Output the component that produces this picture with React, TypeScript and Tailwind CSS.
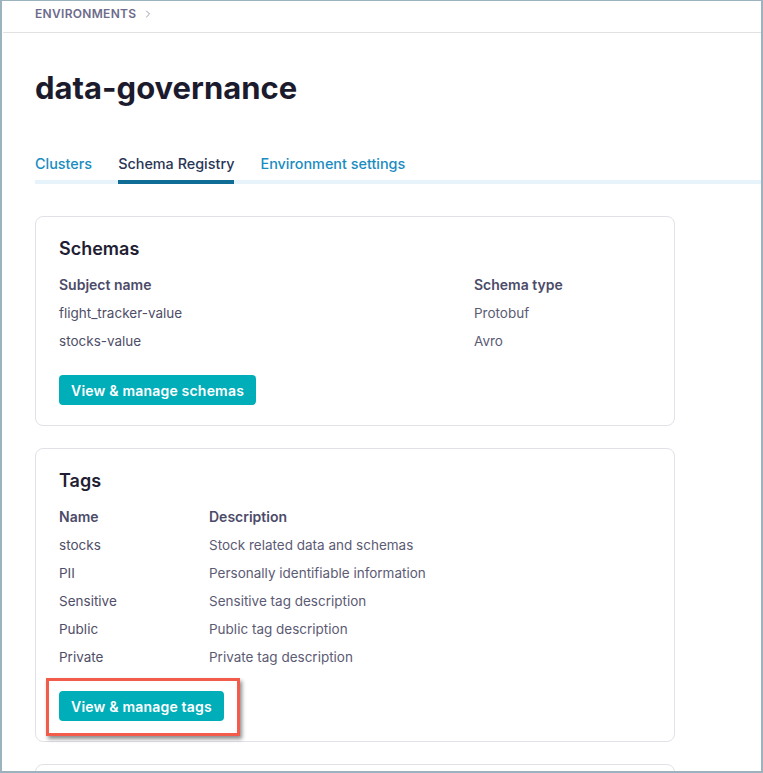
import { ChevronRight } from 'lucide-react';

const schemas = [
  { name: 'flight_tracker-value', type: 'Protobuf' },
  { name: 'stocks-value', type: 'Avro' },
];

const tags = [
  { name: 'stocks', description: 'Stock related data and schemas' },
  { name: 'PII', description: 'Personally identifiable information' },
  { name: 'Sensitive', description: 'Sensitive tag description' },
  { name: 'Public', description: 'Public tag description' },
  { name: 'Private', description: 'Private tag description' },
];

const App = () => {
  return (
    <div className="w-[763px] h-[773px] overflow-hidden bg-white border-t border-l-2 border-r-2 border-b-2 border-[#9cb3bf] font-['Inter',sans-serif]">
      {/* breadcrumb */}
      <div className="h-[32px] ml-px border-b border-[#e2e2e2] pl-[32px] pt-[5px]">
        <div className="flex items-center gap-[6px] text-[12px] leading-4 font-semibold tracking-[0.3px] text-[#6d6b8b]">
          <span>ENVIRONMENTS</span>
          <ChevronRight size={12} strokeWidth={2} className="text-[#9a98ad]" />
        </div>
      </div>

      <div className="pl-[33px]">
        <h1 className="mt-[37px] text-[31px] leading-9 font-bold text-[#1c1b2e]">data-governance</h1>

        {/* tabs */}
        <div className="mt-[48px] flex gap-[26px] border-b-4 border-[#e6f3fa] text-[14.4px] leading-5 font-medium">
          <div className="pb-[6px] text-[#1a8cbf]">Clusters</div>
          <div className="pb-[6px] -mb-1 border-b-4 border-[#0e6c95] text-[#2a3656]">Schema Registry</div>
          <div className="pb-[6px] text-[#1a8cbf]">Environment settings</div>
        </div>

        <div className="mt-[32px] w-[640px] flex flex-col gap-[22px]">
          {/* schemas card */}
          <div className="rounded-lg border border-[#e0e2e7] px-[23px] pt-[20px] pb-5">
            <h2 className="text-[18px] leading-6 font-semibold text-[#1f1e33]">Schemas</h2>
            <div className="mt-[10px] grid grid-cols-[415px_1fr] text-[13.5px] leading-7">
              <div className="text-[14px] font-semibold text-[#4c4b69]">Subject name</div>
              <div className="text-[14px] font-semibold text-[#4c4b69]">Schema type</div>
              {schemas.map((s) => (
                <>
                  <div key={s.name} className="text-[#4f4e68]">{s.name}</div>
                  <div key={s.type} className="text-[#5c5b74]">{s.type}</div>
                </>
              ))}
            </div>
            <button className="mt-5 h-[30px] px-3 rounded bg-[#00aeb9] text-white text-[14px] font-semibold tracking-[0.2px]">
              View &amp; manage schemas
            </button>
          </div>

          {/* tags card */}
          <div className="rounded-lg border border-[#e0e2e7] px-[23px] pt-[20px] pb-5">
            <h2 className="text-[18px] leading-6 font-semibold text-[#1f1e33]">Tags</h2>
            <div className="mt-[10px] grid grid-cols-[150px_1fr] text-[13.5px] leading-7">
              <div className="text-[14px] font-semibold text-[#4c4b69]">Name</div>
              <div className="text-[14px] font-semibold text-[#4c4b69]">Description</div>
              {tags.map((t) => (
                <>
                  <div key={t.name} className="text-[#4f4e68]">{t.name}</div>
                  <div key={t.description} className="text-[#5c5b74]">{t.description}</div>
                </>
              ))}
            </div>
            <div className="relative mt-5 w-fit">
              <button className="h-[30px] px-3 rounded bg-[#00aeb9] text-white text-[14px] font-semibold tracking-[0.2px]">
                View &amp; manage tags
              </button>
              <div className="absolute -left-[13px] -right-[16px] -top-[13px] -bottom-[15px] border-[3px] border-[#f35b4b] shadow-[2px_3px_4px_rgba(0,0,0,0.45)]" />
            </div>
          </div>

          {/* next card, cut off */}
          <div className="h-[60px] rounded-lg border border-[#e0e2e7]" />
        </div>
      </div>
    </div>
  );
};

export default App;
